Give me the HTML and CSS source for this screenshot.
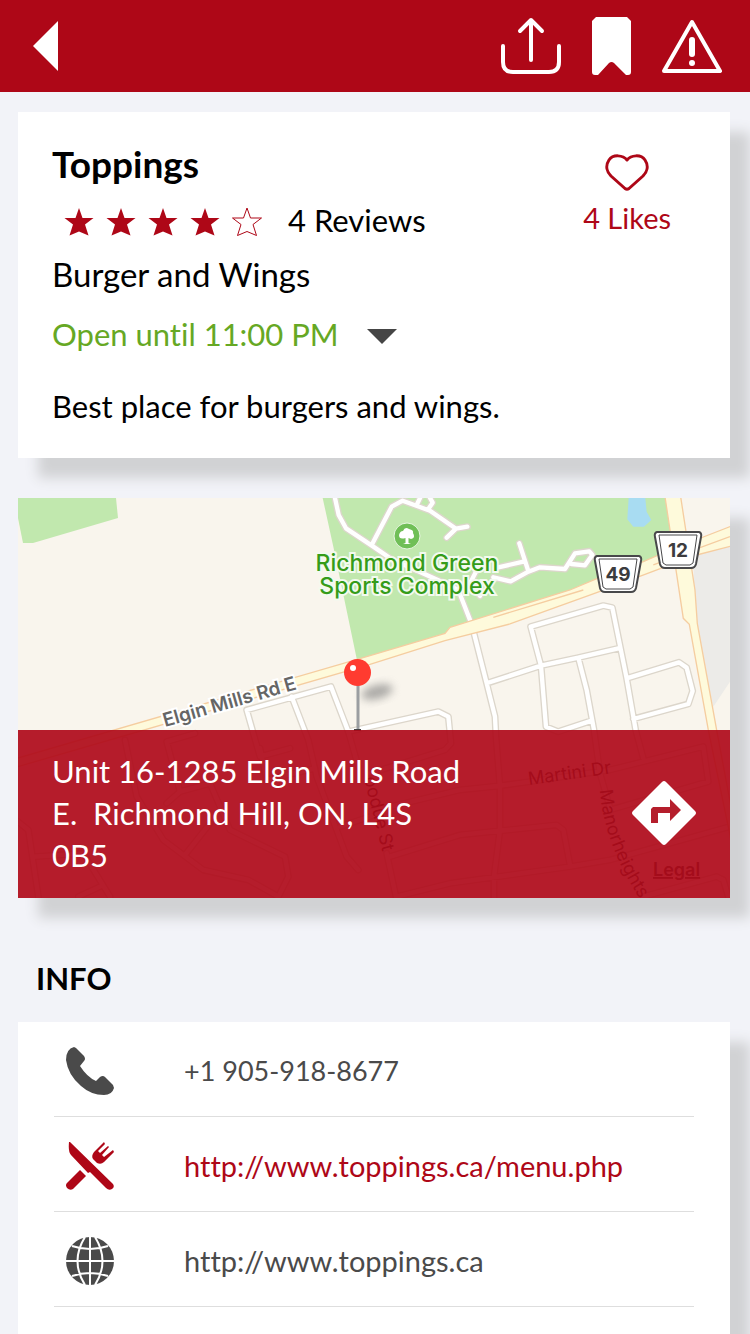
FILE: index.html
```html
<!DOCTYPE html>
<html lang="en">
<head>
<meta charset="utf-8">
<meta name="viewport" content="width=device-width, initial-scale=1">
<title>Toppings</title>
<link rel="stylesheet" href="styles.css">
</head>
<body>
<header class="topbar">
  <button class="icon-button" type="button" aria-label="Back">
    <svg width="26" height="50" viewBox="0 0 26 50"><path d="M25 0V50L0 25Z" fill="#fff"/></svg>
  </button>
  <div class="topbar-actions">
    <button class="icon-button" type="button" aria-label="Share">
      <svg width="60" height="58" viewBox="0 0 60 58" fill="none" stroke="#fff" stroke-width="4" stroke-linecap="round" stroke-linejoin="round"><path d="M30 43V3M19 14L30 3L41 14"/><path d="M2 29V45Q2 55 12 55H48Q58 55 58 45V29" stroke-width="4"/></svg>
    </button>
    <button class="icon-button" type="button" aria-label="Bookmark">
      <svg width="39" height="58" viewBox="0 0 39 58"><path d="M4 0H35L39 4V55Q39 58 36 58H34L22 46Q19.500 44 17 46L6 58H3Q0 58 0 55V4Z" fill="#fff"/></svg>
    </button>
    <button class="icon-button" type="button" aria-label="Report">
      <svg width="60" height="56" viewBox="0 0 60 56"><path d="M30 4L58 53H2Z" fill="none" stroke="#fff" stroke-width="4" stroke-linejoin="round"/><path d="M30 22V36" stroke="#fff" stroke-width="6" stroke-linecap="round"/><circle cx="30" cy="45" r="3" fill="#fff"/></svg>
    </button>
  </div>
</header>
<main class="content">
  <section class="card summary">
    <div class="summary-head">
      <div>
        <h1 class="name">Toppings</h1>
        <div class="rating">
          <svg width="200" height="34" viewBox="0 -4 200 34" role="img" aria-label="4 of 5 stars">
            <defs><path id="star" d="M15 1L18.500 11H29.500L21 17.500L24.500 28.500L15 24.500L5.500 28.500L9 17.500L0.500 11H11.500Z"/></defs>
            <g class="star"><use href="#star"/><use href="#star" x="42"/><use href="#star" x="84"/><use href="#star" x="126"/></g>
            <use class="star-empty" href="#star" x="168"/>
          </svg>
          <span>4 Reviews</span>
        </div>
      </div>
      <button class="likes" type="button">
        <svg width="44" height="38" viewBox="0 0 44 38"><path d="M22 6C18 1 8 0 4 6C0 12 2 18 6 22L20 34.500Q22 36 24 34.500L38 22C42 18 44 12 40 6C36 0 26 1 22 6Z" fill="none" stroke="#ae0717" stroke-width="3" stroke-linejoin="round"/></svg>
        <span>4 Likes</span>
      </button>
    </div>
    <p class="cuisine">Burger and Wings</p>
    <button class="hours" type="button">
      <span>Open until 11:00 PM</span>
      <svg width="30" height="19" viewBox="0 -4 30 19"><path d="M0 0H30L15 15Z" fill="#454545"/></svg>
    </button>
    <p class="about">Best place for burgers and wings.</p>
  </section>

  <section class="card location">
    <svg class="map" viewBox="18 498 712 400" preserveAspectRatio="xMidYMid slice" role="img" aria-label="Map">
      <defs>
        <filter id="soft" x="-50%" y="-50%" width="200%" height="200%"><feGaussianBlur stdDeviation="4"/></filter>
        <path id="manor" d="M600 790Q604 845 642 902"/>
        <g id="park-paths">
          <path d="M-105 24L-94 75L-72 115L10 170L65 208L215 275L265 300L302 395M5 165L65 50L98 32L180 62L258 116L292 110M258 116L230 143M140 45L152 20M175 57L188 38L178 20M385 232L460 215M448 160L475 243M330 318L300 280L325 232M370 262L422 274L475 245L510 232L585 237L615 190L658 184L667 195L645 226L605 222"/>
        </g>
        <g id="streets">
          <path d="M312 430L350 580L375 680L378 740L390 890V1020L372 1160V1240M350 580L513 527L625 503L745 475M513 527L482 410L700 347L727 353L770 565L797 720L820 805M513 527L528 710L565 725L665 692M625 503L650 600L672 720L690 850L722 960M770 565L927 517L950 533L968 603L955 642L790 687M-65 725L205 665L235 680L243 760L225 780L0 850M0 965L270 900L385 888L480 875L720 840L1000 770L1015 875L720 960M60 1100L270 1035L560 1005L580 1020L600 1125M50 1090L80 1230M80 1220L240 1180L600 1130L720 1110L1080 1010M820 1220L1040 1160L1060 1170L1075 1220"/>
          <path transform="translate(-1110 0)" d="M870 775L780 800L740 660L993 590L1045 725L1075 830M875 620L925 750L950 860L1040 1100L1075 1140M780 775L800 870L945 835M1020 1010L1140 970M375 750L410 920L490 1050L610 1140L745 1170L835 1220L865 1160L855 1100L690 1020L630 880L540 905L500 940M540 905L500 755L585 730M555 1095L630 1000M54 995L85 1020L115 1220M105 1100L250 1090L330 1220M235 1220L300 1190"/>
        </g>
      </defs>
      <rect x="18" y="498" width="712" height="400" fill="#f9f5ed"/>
      <path d="M18 498H116L118 518L33 543H23L18 518Z" fill="#c1e8ae"/>
      <g transform="translate(370 490) scale(.3333)">
        <path d="M-142 24H900L920 200L600 310L0 510L-38 515L-110 170Z" fill="#c1e8ae"/>
        <path d="M776 24H826L830 65L844 90L822 110H790L772 88Z" fill="#a8dcf2"/>
        <path d="M970 200L1080 160V575L1030 650L975 400Z" fill="#ecebe8"/>
        <use class="casing" href="#park-paths"/><use class="street" href="#park-paths"/>
        <use class="casing" href="#streets"/><use class="street" href="#streets"/>
        <g class="highway">
          <path d="M-1070 808L0 497L225 430L240 412L600 300L675 268L820 215L900 180L1085 108V168L980 195L680 308L420 402L225 452L0 523L-1070 834Z"/>
          <path d="M885 20H932L975 300L982 400L1040 720L1085 960V1060L1015 720L958 403L940 385Z"/>
          <path d="M370 382L640 300M850 225L1080 140" fill="none"/>
        </g>
      </g>
      <circle cx="407" cy="536" r="13" fill="#70bf57" stroke="#e8f6e1"/>
      <path d="M405.500 543V538Q399 540 399 535Q400 531 403 531Q405 526 409 529Q414 530 413 533Q416 538 411 539L408.500 538V543L411 544H403Z" fill="#fff"/>
      <text class="park-label"><tspan x="407" y="571">Richmond Green</tspan><tspan x="407" y="594">Sports Complex</tspan></text>
      <text class="road-label" transform="translate(165 727) rotate(-16)">Elgin Mills Rd E</text>
      <g class="shield">
        <path d="M597 556H639Q642 557 641 561L636 588Q635 592 631 592H605Q601 592 600 588L595 561Q594 557 597 556Z"/>
        <path class="shield-inner" d="M599 559H637L633 587L630 589H606L603 587Z"/>
        <text x="618" y="581">49</text>
        <path d="M657 532H699Q702 533 701 537L696 564Q695 568 691 568H665Q661 568 660 564L655 537Q654 533 657 532Z"/>
        <path class="shield-inner" d="M659 535H697L693 563L690 565H666L663 563Z"/>
        <text x="678" y="557">12</text>
      </g>
      <ellipse cx="377" cy="692" rx="16" ry="7" fill="#777" opacity=".6" transform="rotate(-15 377 692)" filter="url(#soft)"/>
      <path d="M358 684V731" stroke="#9b9ea1" stroke-width="3"/>
      <path d="M354 730H361" stroke="#444" stroke-width="2"/>
      <circle cx="357.500" cy="672.500" r="13.500" fill="#ff3b30"/><circle cx="353" cy="668" r="3" fill="#fff"/>
      <g class="street-label">
        <text transform="translate(529 785) rotate(-8)">Martini Dr</text>
        <text><textPath href="#manor">Manorheights</textPath></text>
        <text transform="translate(364 778) rotate(76)">oodue St</text>
        <text class="legal" x="653" y="876">Legal</text>
      </g>
    </svg>
    <div class="address">
      <address>Unit 16-1285 Elgin Mills Road<br>E.&nbsp; Richmond Hill, ON, L4S<br>0B5</address>
      <button class="icon-button" type="button" aria-label="Directions">
        <svg width="64" height="64" viewBox="0 0 64 64"><path d="M30 1Q32 -1 34 1L63 30Q65 32 63 34L34 63Q32 65 30 63L1 34Q-1 32 1 30Z" fill="#fff"/><path d="M19 42V28L21 26H38V18L49 29L38 40V32H26V42Z" fill="#b51e2c"/></svg>
      </button>
    </div>
  </section>

  <h2 class="section-title">INFO</h2>
  <section class="card info">
    <a class="row row-phone" href="tel:+19059188677">
      <svg width="48" height="48" viewBox="0 0 48 48"><path d="M8 0Q0 2 0 13Q2 28 15 39Q25 48 38 48Q46 48 48 41L47 38L39 30Q37 28 34 30L30 34Q21 30 14 19L18 14Q20 12 18 9L10 1Z" fill="#4a4a4a"/></svg>
      <span>+1 905-918-8677</span>
    </a>
    <a class="row row-menu" href="http://www.toppings.ca/menu.php">
      <svg width="48" height="48" viewBox="0 0 48 48" fill="#ae0717"><path d="M3 0L4 0L47 42Q49 45 46 47Q43 49 40 46L24 30L22 31L5 13Q2 10 3 0Z"/><path d="M14 28L20 34L7 47Q4 49 1 46Q-1 43 1 41Z"/><path d="M38 0L39 2L32 9L34 11L42 4L43 5L36 13L38 15L47 8L48 10L38 20Q35 23 31 21L27 17Q25 14 28 10Z"/></svg>
      <span>http://www.toppings.ca/menu.php</span>
    </a>
    <a class="row" href="http://www.toppings.ca">
      <svg width="48" height="48" viewBox="0 0 48 48"><circle cx="24" cy="24" r="24" fill="#4a4a4a"/><path d="M24 0V48M0 24H48M19 0Q4 24 19 48M29 0Q44 24 29 48M6 9Q24 15 42 9M6 39Q24 33 42 39" fill="none" stroke="#fff" stroke-width="2"/></svg>
      <span>http://www.toppings.ca</span>
    </a>
  </section>
</main>
</body>
</html>
```
FILE: styles.css
```css
* { box-sizing: border-box; }

body {
  margin: 0;
  min-height: 100vh;
  display: flex;
  flex-direction: column;
  overflow-x: hidden;
  background: #f2f3f8;
  color: #000;
  font-family: Lato, "Open Sans", sans-serif;
  font-size: 31px;
  line-height: 40px;
  font-variant-ligatures: none;
}

h1, h2, p { margin: 0; }
svg { display: block; flex: none; }
button { padding: 0; border: 0; background: none; font: inherit; color: inherit; cursor: pointer; }

.topbar {
  display: flex;
  align-items: center;
  justify-content: space-between;
  height: 92px;
  padding: 0 28px 0 33px;
  background: #ae0717;
}
.topbar-actions { display: flex; align-items: center; gap: 31px; }

.content {
  flex: 1;
  display: flex;
  flex-direction: column;
  padding: 20px 20px 0 18px;
}

.card { background: #fff; box-shadow: 20px 20px 12px #d1d2d4; }

.summary { padding: 32px 34px; margin-bottom: 40px; }
.summary-head { display: flex; justify-content: space-between; }
.name { font-size: 37px; line-height: 40px; }
.rating { display: flex; align-items: center; gap: 24px; margin-top: 16px; padding-left: 12px; }
.star { fill: #ae0717; }
.star-empty { fill: none; stroke: #ae0717; }
.likes {
  display: flex;
  flex-direction: column;
  align-items: center;
  align-self: flex-start;
  gap: 6px;
  margin: 10px 25px 0 0;
  color: #ae0717;
  font-size: 29px;
}
.cuisine { margin-top: 14px; font-size: 33px; }
.hours { display: flex; align-items: center; gap: 28px; margin-top: 20px; color: #66a824; }
.about { margin-top: 32px; }

.location { display: grid; }
.map { grid-area: 1 / 1; width: 100%; height: 100%; min-height: 400px; }
.address {
  grid-area: 1 / 1;
  align-self: end;
  display: flex;
  align-items: center;
  justify-content: space-between;
  padding: 20px 34px 22px;
  background: rgba(174, 7, 23, .91);
  color: #fff;
  z-index: 1;
}
.address address { line-height: 42px; font-style: normal; }

.casing { fill: none; stroke: #dcd6cb; stroke-width: 21; stroke-linejoin: round; stroke-linecap: round; }
.street { fill: none; stroke: #fff; stroke-width: 13; stroke-linejoin: round; stroke-linecap: round; }
.highway { fill: #fefadb; stroke: #f5cda0; stroke-width: 4; }
.park-label, .road-label, .street-label, .shield { font-family: Inter, sans-serif; }
.park-label {
  fill: #359c19;
  font-size: 23px;
  font-weight: 500;
  text-anchor: middle;
  paint-order: stroke;
  stroke: #f3faef;
  stroke-width: 4px;
}
.road-label {
  fill: #666;
  font-size: 19px;
  font-weight: 600;
  paint-order: stroke;
  stroke: #fff;
  stroke-width: 4px;
}
.street-label { fill: #444; font-size: 18px; }
.legal { font-weight: 600; text-decoration: underline; }
.shield path { fill: #fff; stroke: #48484a; stroke-width: 2; }
.shield .shield-inner { fill: none; stroke-width: 1; }
.shield text { fill: #3c3c3e; font-size: 19px; font-weight: 700; text-anchor: middle; }

.section-title { margin: 60px 0 24px 18px; font-size: 31px; line-height: 40px; }

.info { flex: 1; padding: 0 36px; }
.row {
  display: flex;
  align-items: center;
  gap: 70px;
  height: 95px;
  padding: 4px 12px 0;
  border-bottom: 1px solid #dedede;
  color: #4a4a4a;
  font-size: 29px;
  text-decoration: none;
}
.row-phone { font-size: 27px; }
.row-menu { color: #ae0717; }
```
